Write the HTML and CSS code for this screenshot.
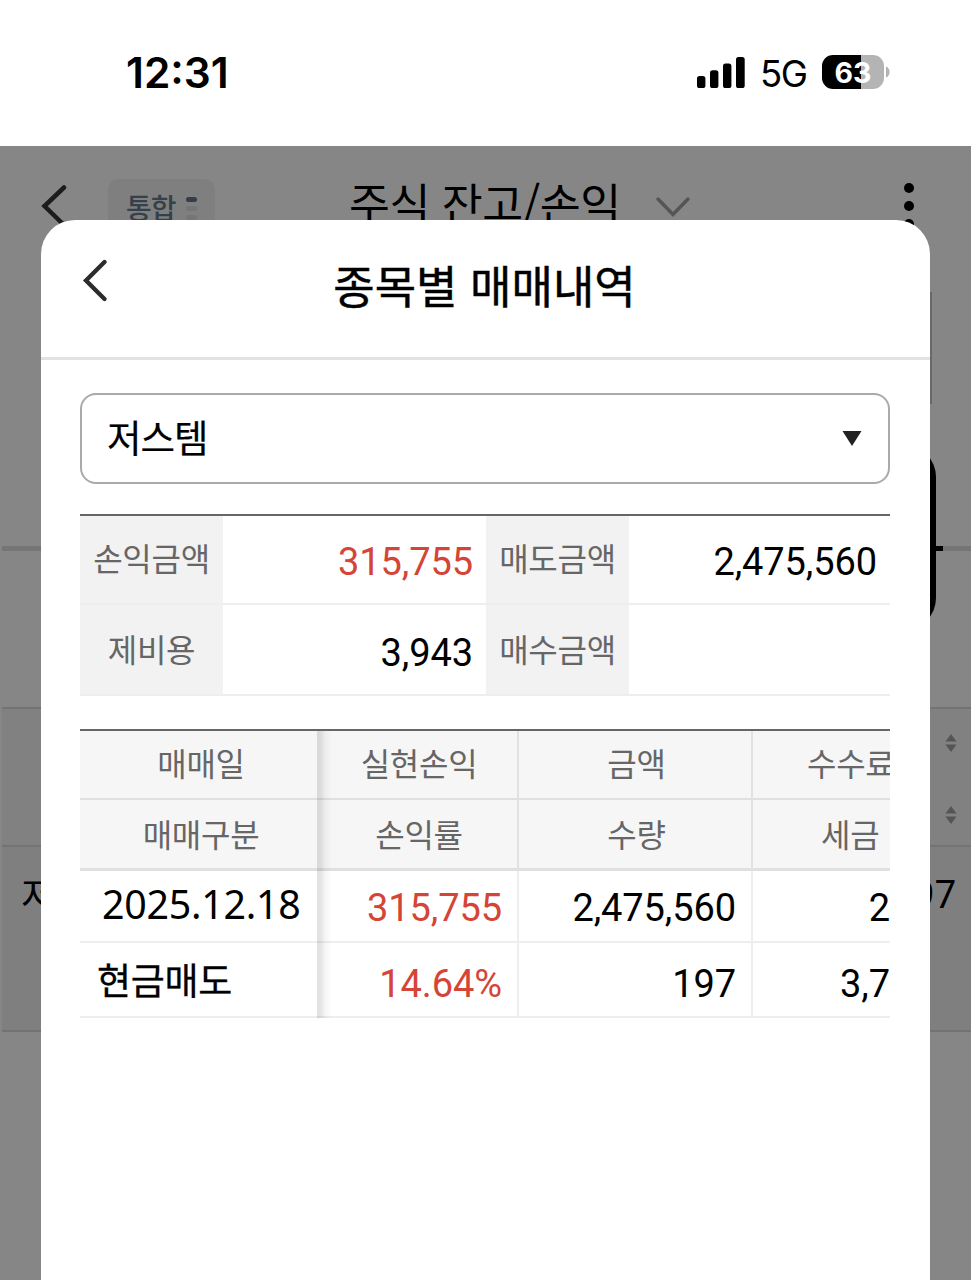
FILE: index.html
```html
<!DOCTYPE html>
<html lang="ko">
<head>
<meta charset="utf-8">
<title>종목별 매매내역</title>
<link rel="stylesheet" href="styles.css">
</head>
<body>
<div class="phone">
  <header class="status">
    <span class="clock">12:31</span>
    <div class="status-icons">
      <svg class="signal" width="48" height="31" viewBox="0 0 48 31"><rect x="0" y="19" width="8.4" height="12" rx="2.6"/><rect x="13" y="13.200" width="8.400" height="17.800" rx="2.600"/><rect x="26" y="6.500" width="8.400" height="24.500" rx="2.600"/><rect x="39" y="0" width="8.700" height="31" rx="2.600"/></svg>
      <span class="network">5G</span>
      <div class="battery"><span class="battery-body">63</span><svg width="4" height="12" viewBox="0 0 4 12"><path d="M0 0.500C4.800 2 4.800 10 0 11.500Z" fill="#b4b4b4"/></svg></div>
    </div>
  </header>
  <main class="screen">
    <div class="app">
      <div class="app-bar">
        <svg class="app-back" width="28" height="44" viewBox="0 0 28 44"><path d="M24 3.500L4.500 22L24 41"/></svg>
        <div class="chip"><span>통합</span><span class="chip-dots"><i class="on"></i><i></i><i></i></span></div>
        <span class="app-title">주식 잔고/손익</span>
        <svg class="app-down" width="36" height="22" viewBox="0 0 36 22"><path d="M3 3L18 18.500L33 3"/></svg>
        <span class="app-menu"><i></i><i></i><i></i></span>
      </div>
      <div class="app-tabs"></div>
      <div class="app-gap"></div>
      <div class="app-head">
        <svg class="sort" width="12" height="18" viewBox="0 0 12 18"><path d="M6 0L11.500 7.500H.5ZM6 18L11.500 10.500H.5Z"/></svg>
        <svg class="sort" width="12" height="18" viewBox="0 0 12 18"><path d="M6 0L11.500 7.500H.5ZM6 18L11.500 10.500H.5Z"/></svg>
      </div>
      <div class="app-row"><span>저</span><span class="num">97</span></div>
      <div class="app-scroll"></div>
      <div class="app-fab"></div>
      <div class="app-mark"></div>
    </div>
    <section class="sheet">
      <div class="sheet-head">
        <svg class="sheet-back" width="26" height="44" viewBox="0 0 26 44"><path d="M22.500 3L4 21.500L22.500 40"/></svg>
        <h1>종목별 매매내역</h1>
      </div>
      <div class="sheet-body">
        <div class="select"><span>저스템</span><svg width="20" height="15" viewBox="0 0 20 15"><path d="M.5 0H19.500L10 15Z"/></svg></div>
        <div class="summary">
          <div class="label">손익금액</div><div class="value red">315,755</div><div class="label">매도금액</div><div class="value">2,475,560</div>
          <div class="label low">제비용</div><div class="value low">3,943</div><div class="label low">매수금액</div><div class="value low"></div>
        </div>
        <div class="trades">
          <div class="fixed">
            <div class="th">매매일</div><div class="th">매매구분</div><div class="td date">2025.12.18</div><div class="td kind">현금매도</div>
          </div>
          <div class="cols">
            <div class="th">실현손익</div><div class="th">금액</div><div class="th fee">수수료</div>
            <div class="th">손익률</div><div class="th">수량</div><div class="th fee">세금</div>
            <div class="td red">315,755</div><div class="td">2,475,560</div><div class="td last">2</div>
            <div class="td red">14.64%</div><div class="td">197</div><div class="td last">3,7</div>
          </div>
        </div>
      </div>
    </section>
  </main>
</div>
</body>
</html>
```
FILE: styles.css
```css
* { box-sizing: border-box; }
body { margin: 0; background: #fff; color: #000; font-family: "Noto Sans CJK KR", sans-serif; }
.phone { width: 971px; height: 1280px; overflow: hidden; display: flex; flex-direction: column; }

.status { height: 146px; flex: none; display: flex; justify-content: space-between; padding: 46px 81px 0 126px; }
.clock { font: 600 42.4px/54px Inter, sans-serif; }
.status-icons { display: flex; align-items: center; height: 54px; }
.signal { margin-top: -2px; margin-right: 1px; }
.network { font: 400 36.5px/54px Inter, sans-serif; margin-left: 14px; width: 62px; letter-spacing: -1.5px; padding-top: 1px; }
.battery { display: flex; align-items: center; gap: 2px; margin-top: -3px; }
.battery-body { width: 62px; height: 34px; border-radius: 11px; background: linear-gradient(90deg, #000 39px, #b4b4b4 39px); color: #fff; font: 700 28.5px/35px Inter, sans-serif; text-align: center; }

.screen { position: relative; flex: 1; background: #868686; overflow: hidden; }
.app { display: flex; flex-direction: column; }
.app-bar { height: 135px; display: flex; align-items: flex-start; padding: 0 52px 0 40px; }
.app-back { margin-top: 38px; fill: none; stroke: #1c1c1c; stroke-width: 4.5; stroke-linecap: round; }
.chip { width: 107px; height: 54px; margin: 33px 0 0 40px; border-radius: 11px; background: #7f7f7f; color: #36404a; display: flex; padding: 8px 0 0 18px; font-size: 28px; font-weight: 500; line-height: 40px; letter-spacing: -1px; }
.chip-dots { display: flex; flex-direction: column; gap: 4px; margin: 10px 0 0 10px; }
.chip-dots i { width: 11px; height: 5px; border-radius: 3px; background: #757575; }
.chip-dots .on { background: #353d45; }
.app-title { margin: 24px 0 0 134px; width: 306px; font-size: 44.5px; line-height: 64px; white-space: nowrap; letter-spacing: -.5px; }
.app-down { margin-top: 50px; fill: none; stroke: #555; stroke-width: 3.5; stroke-linecap: round; }
.app-menu { margin-left: auto; display: flex; flex-direction: column; gap: 8px; margin-top: 37px; padding-right: 5px; }
.app-menu i { width: 10px; height: 10px; border-radius: 50%; background: #000; }
.app-tabs { height: 270px; margin-left: 2px; border-bottom: 5px solid #757575; }
.app-gap { height: 156px; }
.app-head { height: 140px; margin-left: 2px; border: solid #737373; border-width: 2px 0; background: #818181; display: flex; flex-direction: column; align-items: flex-end; padding: 25px 14px 0 0; gap: 54px; }
.sort { fill: #555; flex: none; }
.app-row { height: 185px; margin-left: 2px; border-bottom: 2px solid #737373; background: #7f7f7f; display: flex; justify-content: space-between; padding: 16px 15px 0 19px; font-size: 38px; line-height: 59px; }
.app-row .num { font: 400 38px/60px Roboto, sans-serif; padding-top: 2px; }
.app-scroll { position: absolute; left: 926px; top: 146px; width: 6px; height: 112px; background: #696969; }
.app-fab { position: absolute; left: 860px; top: 299px; width: 76px; height: 185px; border-radius: 32px; background: #000; }
.app-mark { position: absolute; left: 930px; top: 400px; width: 13px; height: 5px; background: #000; }

.sheet { position: absolute; left: 41px; top: 74px; width: 889px; height: 1080px; border-radius: 34px 34px 0 0; background: #fff; }
.sheet-head { position: relative; height: 140px; border-bottom: 3px solid #e2e2e2; display: flex; justify-content: center; }
.sheet-back { position: absolute; left: 41px; top: 39px; fill: none; stroke: #2c2c2c; stroke-width: 4.3; stroke-linecap: round; }
h1 { margin: 30px 2px 0 0; font-size: 45px; font-weight: 400; line-height: 70px; letter-spacing: 0; -webkit-text-stroke: .5px #000; }
.sheet-body { padding: 33px 40px 0 39px; }
.select { height: 91px; border: 2.5px solid #aaa; border-radius: 16px; display: flex; align-items: center; justify-content: space-between; padding: 0 26px 0 25px; font-size: 37.5px; line-height: 60px; letter-spacing: -1px; -webkit-text-stroke: .2px #000; }
.select span { margin-top: -6px; }
.select svg { margin-top: -1px; fill: #222; }

.summary { margin-top: 30px; border-top: 2px solid #666; display: grid; grid-template-columns: 143px 263px 143px 261px; grid-template-rows: 89px 91px; }
.label, .value { border-bottom: 2px solid #eee; }
.label { background: #f2f2f2; color: #666; text-align: center; font-size: 32px; letter-spacing: -.3px; line-height: 82px; }
.value { text-align: right; padding: 3px 13px 0 0; font: 400 38px/86px Roboto, sans-serif; letter-spacing: -.1px; }
.label.low { line-height: 87px; }
.value.low { line-height: 90px; }
.red { color: #d44537; }

.trades { margin-top: 33px; border-top: 2px solid #666; display: flex; width: 810px; overflow: hidden; }
.fixed { position: relative; width: 238px; flex: none; display: grid; grid-template-rows: 69px 71px 72px 75px; z-index: 1; }
.fixed::after { content: ""; position: absolute; left: 237px; top: 0; bottom: 0; width: 15px; background: linear-gradient(90deg, rgba(0,0,0,.12), rgba(0,0,0,.1) 4px, rgba(0,0,0,.04) 8px, transparent); }
.cols { display: grid; grid-template-columns: 201px 234px 137px; grid-template-rows: 69px 71px 72px 75px; }
.th { background: #f6f6f6; color: #666; border-bottom: 2px solid #e0e0e0; font-size: 32px; letter-spacing: -.3px; line-height: 63px; text-align: center; white-space: nowrap; }
.fixed .th:nth-child(2), .cols .th:nth-child(n+4) { border-bottom: 3px solid #e0e0e0; line-height: 67px; }
.fixed .th { padding-left: 4px; }
.cols .th { padding-left: 3px; }
.td { background: #fff; border-bottom: 2px solid #eee; font: 400 38px/74px Roboto, sans-serif; letter-spacing: -.1px; text-align: right; }
.cols .th, .cols .td { border-right: 2px solid #e2e2e2; }
.cols .td { padding-right: 15px; border-right-color: #eee; }
.cols .td:nth-child(n+10) { line-height: 82px; }
.cols .fee, .cols .last { border-right: 0; }
.cols .fee { padding-left: 54px; text-align: left; overflow: hidden; }
.cols .fee:nth-child(6) { padding-left: 68px; }
.cols .last { padding-right: 0; }
.td.date { font: 400 39.4px/66px "Noto Sans", sans-serif; text-align: left; padding-left: 22px; letter-spacing: -.3px; }
.td.kind { font: 400 37px/73px "Noto Sans CJK KR", sans-serif; text-align: left; padding-left: 17px; letter-spacing: -.3px; -webkit-text-stroke: .3px #000; }
```
